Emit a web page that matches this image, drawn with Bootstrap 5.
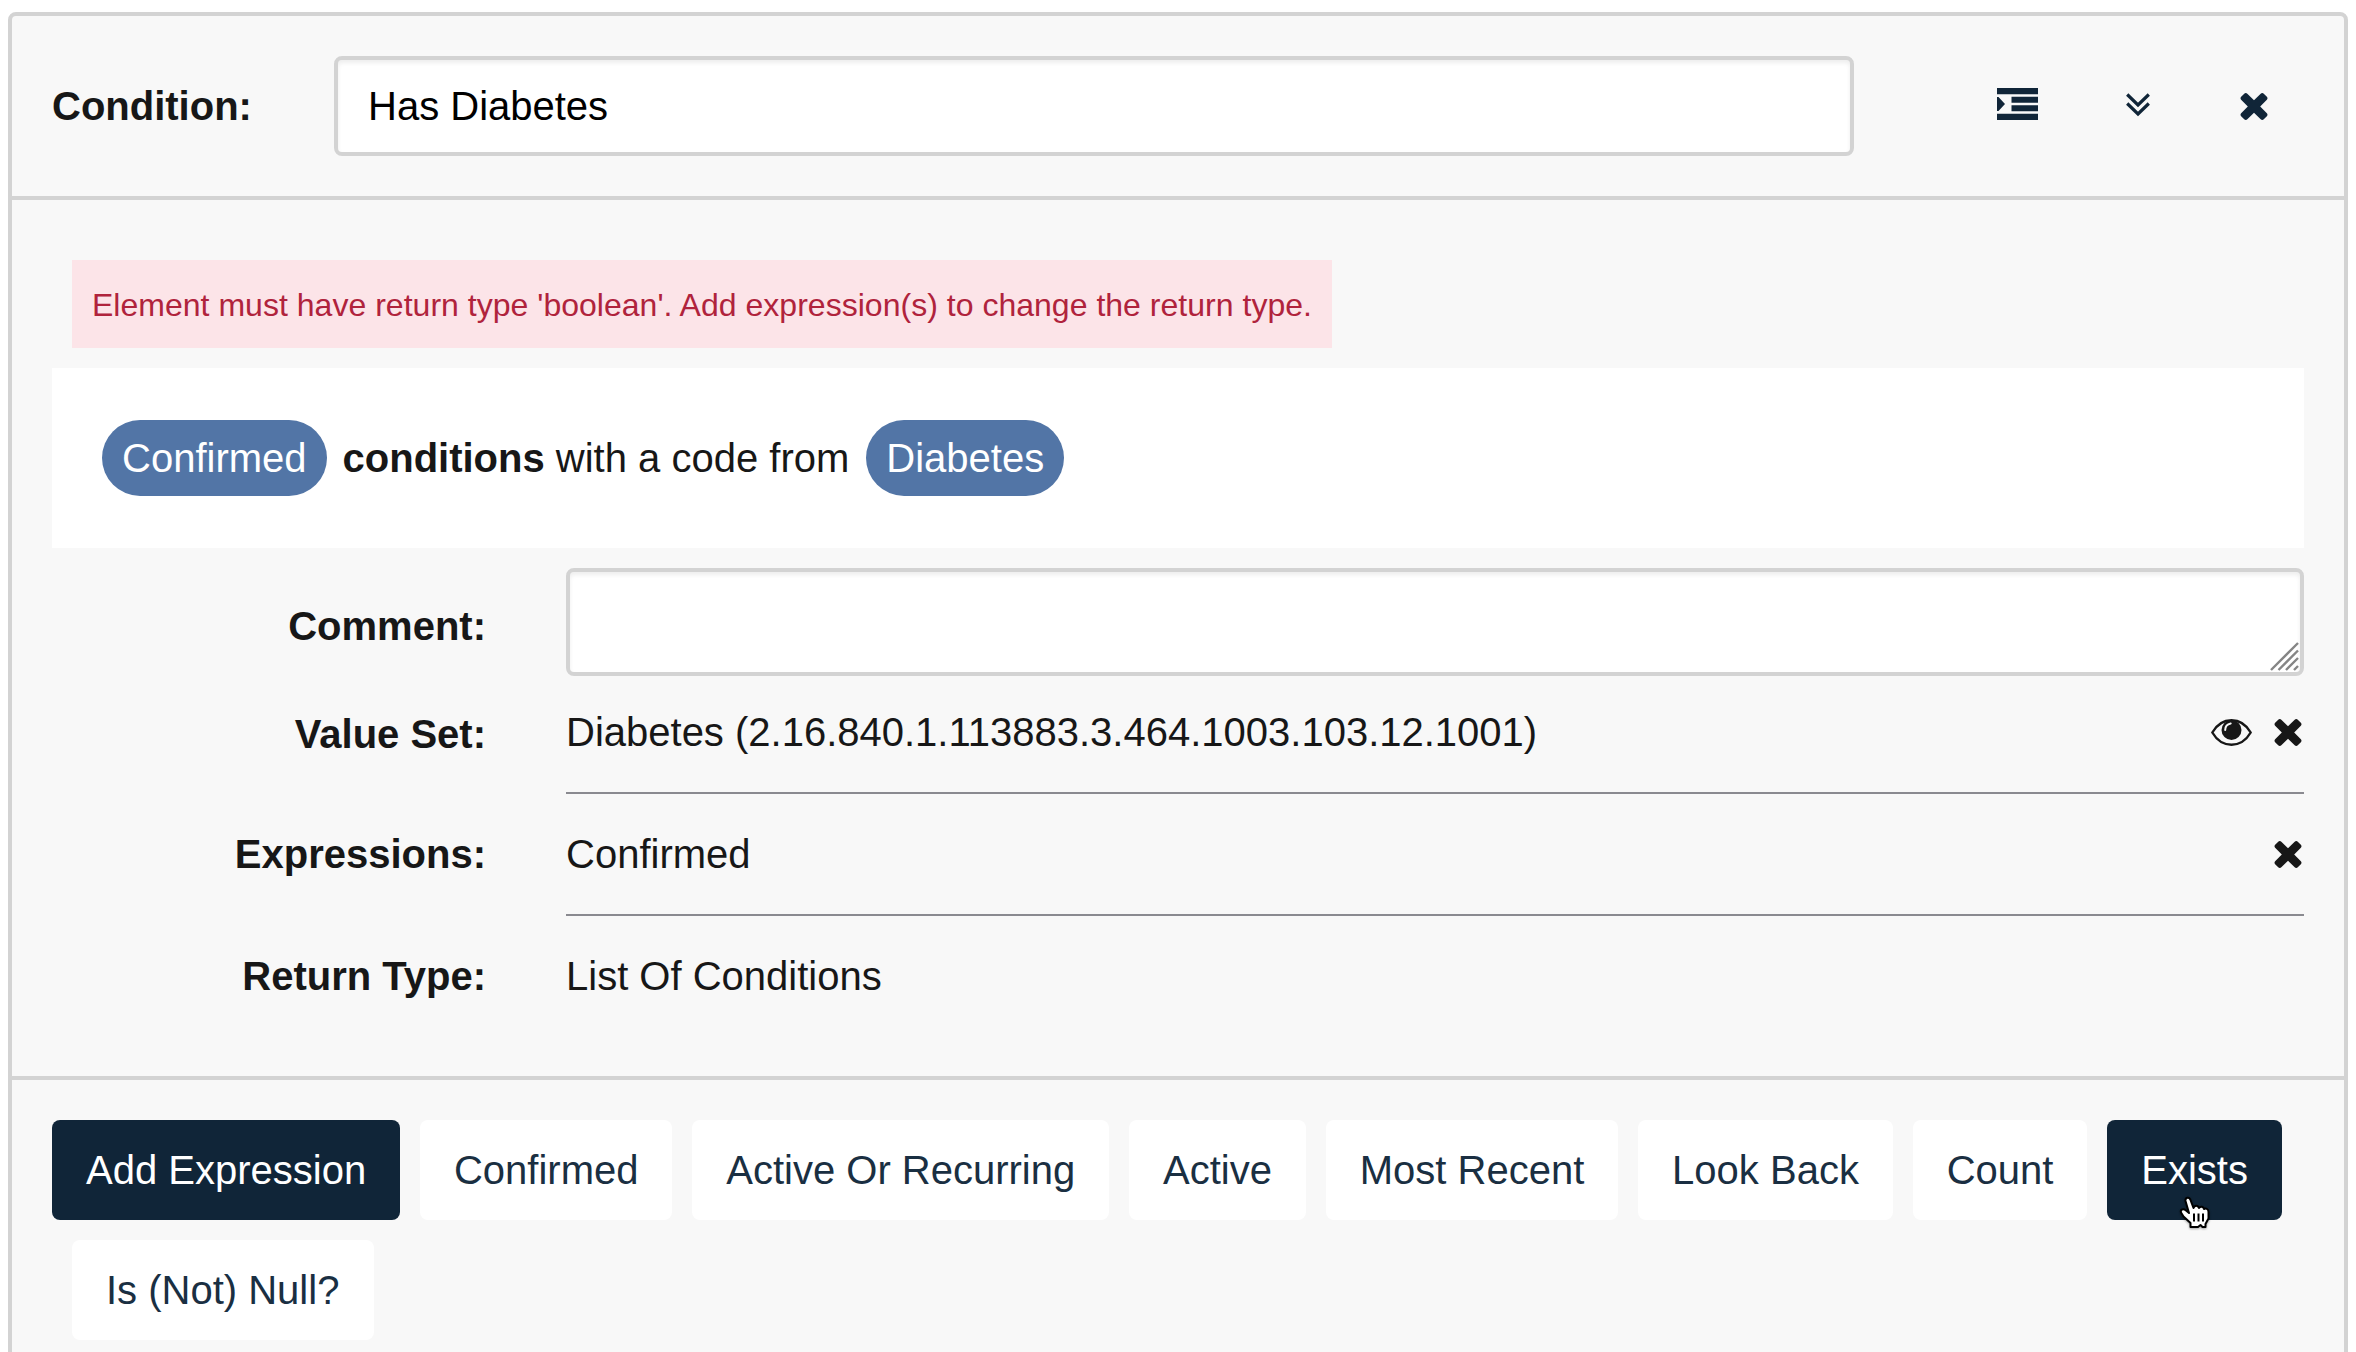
<!DOCTYPE html>
<html lang="en">
<head>
<meta charset="utf-8">
<title>Condition builder</title>
<link href="https://cdn.jsdelivr.net/npm/bootstrap@5.3.0/dist/css/bootstrap.min.css" rel="stylesheet">
<style>
html, body { height: 1352px; overflow: hidden; }
body { background: #fff; color: #171717; font-family: "Liberation Sans", Arial, sans-serif; font-size: 40px; line-height: 56px; padding: 12px 8px 0; }
svg { display: block; }
.element-card { background: #f8f8f8; border: 4px solid #d3d3d3; border-radius: 8px; height: 1400px; font-size: 40px; }
.element-head { background: none; height: 184px; border-bottom: 4px solid #d3d3d3; padding: 0 76px 0 40px; }
.element-name { width: 1520px; height: 100px; margin-left: 82px; }
.text-field { color: #000; background: #fff; border: 4px solid #d3d3d3; border-radius: 8px; box-shadow: inset 0 3px 4px rgba(0,0,0,.07); font-size: 40px; line-height: 56px; padding: 0 30px; }
.label-name { width: 200px; }
.head-icons { color: #102538; }
.icon-indent { margin: -5px 88px 0 0; }
.icon-collapse { margin-right: 90px; }
.element-main { padding: 60px 40px 0; height: 876px; }
.type-error { background: #fce4e8; color: #b0233c; font-size: 32px; letter-spacing: .02px; height: 88px; margin-left: 20px; padding: 2px 20px 0; width: 1260px; white-space: nowrap; }
.phrase { background: #fff; height: 180px; margin-top: 20px; padding: 0 50px; }
.phrase-text { margin: 0 17px 0 16px; }
.pill { background: #5275a6; color: #fff; height: 76px; padding: 0 20px; border-radius: 38px; }
.form-line > .line-label { width: 434px; text-align: right; }
.form-line > .line-value { margin-left: 80px; }
.rule { border-bottom: 2px solid #8a8a90; }
.comment { margin-top: 20px; height: 108px; }
.comment textarea { height: 108px; resize: none; display: block; }
.grip { right: 4px; bottom: 4px; }
.line-set { height: 118px; }
.line-set > .line-label { padding-top: 30px; }
.line-set > .line-value { padding-top: 28px; }
.line-next { height: 122px; }
.line-next > * { padding-top: 32px; }
.line-icons { padding: 15px 2px 0 0; }
.icon-eye { margin-right: 22px; }
.element-foot { background: none; border-top: 4px solid #d3d3d3; padding: 40px 0 0 40px; }
.btn-expr { --bs-btn-font-size: 40px; --bs-btn-line-height: 56px; --bs-btn-border-width: 0; --bs-btn-border-radius: 8px; --bs-btn-padding-x: 34px; --bs-btn-padding-y: 0; --bs-btn-color: #1a2f42; --bs-btn-bg: #fff; height: 100px; margin: 0 0 20px 19.800px; }
.btn-last { margin-left: 20px; padding-right: 35px; }
.btn-dark-navy { --bs-btn-color: #fff; --bs-btn-bg: #102538; }
.pointer { left: 72px; top: 76px; z-index: 2; filter: drop-shadow(0 1px 1px rgba(0,0,0,.35)); overflow: visible; }
</style>
</head>
<body>
<svg class="d-none"><defs>
<symbol id="times" viewBox="302 366 1188 1188"><path fill="currentColor" d="M1490 1322q0 40-28 68l-136 136q-28 28-68 28t-68-28l-294-294-294 294q-28 28-68 28t-68-28l-136-136q-28-28-28-68t28-68l294-294-294-294q-28-28-28-68t28-68l136-136q28-28 68-28t68 28l294 294 294-294q28-28 68-28t68 28l136 136q28 28 28 68t-28 68l-294 294 294 294q28 28 28 68z"/></symbol>
</defs></svg>
<div class="card element-card">
  <div class="card-header element-head d-flex align-items-center">
    <strong class="label-name">Condition:</strong>
    <input class="form-control text-field element-name" value="Has Diabetes">
    <div class="head-icons d-flex ms-auto">
      <svg class="icon-indent" width="41" height="32" viewBox="0 0 41 32" fill="currentColor"><path d="M0 0h41v6.300H0zM14.500 8.700H41v6H14.500zM14.500 17.300H41v6H14.500zM0 25.700h41V32H0zM0 9h1.500L8 16l-6.500 7H0z"/></svg>
      <svg class="icon-collapse" width="24" height="26" viewBox="0 0 24 26" fill="none" stroke="currentColor" stroke-width="3.200"><path d="M1.200 1.500 12 12 22.800 1.500M1.200 10.500 12 21 22.800 10.500"/></svg>
      <svg width="28" height="27"><use href="#times"/></svg>
    </div>
  </div>
  <div class="element-main">
    <div class="type-error d-flex align-items-center">Element must have return type 'boolean'. Add expression(s) to change the return type.</div>
    <div class="phrase d-flex align-items-center">
      <span class="pill d-flex align-items-center">Confirmed</span>
      <span class="phrase-text"><strong>conditions</strong> with a code from</span>
      <span class="pill d-flex align-items-center">Diabetes</span>
    </div>
    <div class="form-line comment d-flex align-items-center">
      <strong class="line-label pt-2">Comment:</strong>
      <div class="line-value flex-grow-1 position-relative">
        <textarea class="form-control text-field"></textarea>
        <svg class="grip position-absolute" width="30" height="30" viewBox="0 0 30 30" stroke="#858585" stroke-width="2.400"><path d="M1 28 28 1M8.500 28 28 8.500M16 28l12-12M24 28l4-4"/></svg>
      </div>
    </div>
    <div class="form-line line-set d-flex">
      <strong class="line-label">Value Set:</strong>
      <div class="line-value rule flex-grow-1 d-flex justify-content-between">
        <span>Diabetes (2.16.840.1.113883.3.464.1003.103.12.1001)</span>
        <span class="line-icons d-flex">
          <svg class="icon-eye" width="41" height="27" viewBox="0 0 41 27" fill="none"><path stroke="currentColor" stroke-width="2.400" stroke-linejoin="round" d="M1.300 13.500C6 5.500 13 1.300 20.500 1.300S35 5.500 39.700 13.500C35 21.500 28 25.700 20.500 25.700S6 21.500 1.300 13.500z"/><circle cx="20.500" cy="11" r="10" fill="currentColor"/><path stroke="#f8f8f8" stroke-width="2" stroke-linecap="round" d="M14.200 11q0-5.500 5.500-6.500"/></svg>
          <svg width="28" height="27"><use href="#times"/></svg>
        </span>
      </div>
    </div>
    <div class="form-line line-next d-flex">
      <strong class="line-label">Expressions:</strong>
      <div class="line-value rule flex-grow-1 d-flex justify-content-between">
        <span>Confirmed</span>
        <span class="line-icons"><svg width="28" height="27"><use href="#times"/></svg></span>
      </div>
    </div>
    <div class="form-line line-next d-flex">
      <strong class="line-label">Return Type:</strong>
      <div class="line-value">List Of Conditions</div>
    </div>
  </div>
  <div class="card-footer element-foot d-flex flex-wrap align-content-start">
    <button class="btn btn-expr btn-dark-navy ms-0">Add Expression</button>
    <button class="btn btn-expr">Confirmed</button>
    <button class="btn btn-expr">Active Or Recurring</button>
    <button class="btn btn-expr">Active</button>
    <button class="btn btn-expr">Most Recent</button>
    <button class="btn btn-expr">Look Back</button>
    <button class="btn btn-expr">Count</button>
    <button class="btn btn-expr btn-dark-navy position-relative">Exists
      <svg class="pointer position-absolute" width="30" height="34" viewBox="0 0 30 34" fill="#fff" stroke="#000" stroke-width="2" stroke-linejoin="round"><path d="M11.500 31v-4L4.500 20.500 2 16.500C1 13 4.500 12.500 7 14.500L10 17 6.500 5C6 1.500 10 .5 11.300 3.500L14.500 12C15.500 9 19 9 20 12c1.500-2 4.500-1.500 5 1 2-1 4.500 0 4.500 3v6.500L26.500 28v3h-3l-2-2-2.500 2z"/><path d="M15 17.500v8M19.500 17.500v8M24 17.500v8"/></svg>
    </button>
    <button class="btn btn-expr btn-last">Is (Not) Null?</button>
  </div>
</div>
<script src="https://cdn.jsdelivr.net/npm/bootstrap@5.3.0/dist/js/bootstrap.bundle.min.js"></script>
</body>
</html>
